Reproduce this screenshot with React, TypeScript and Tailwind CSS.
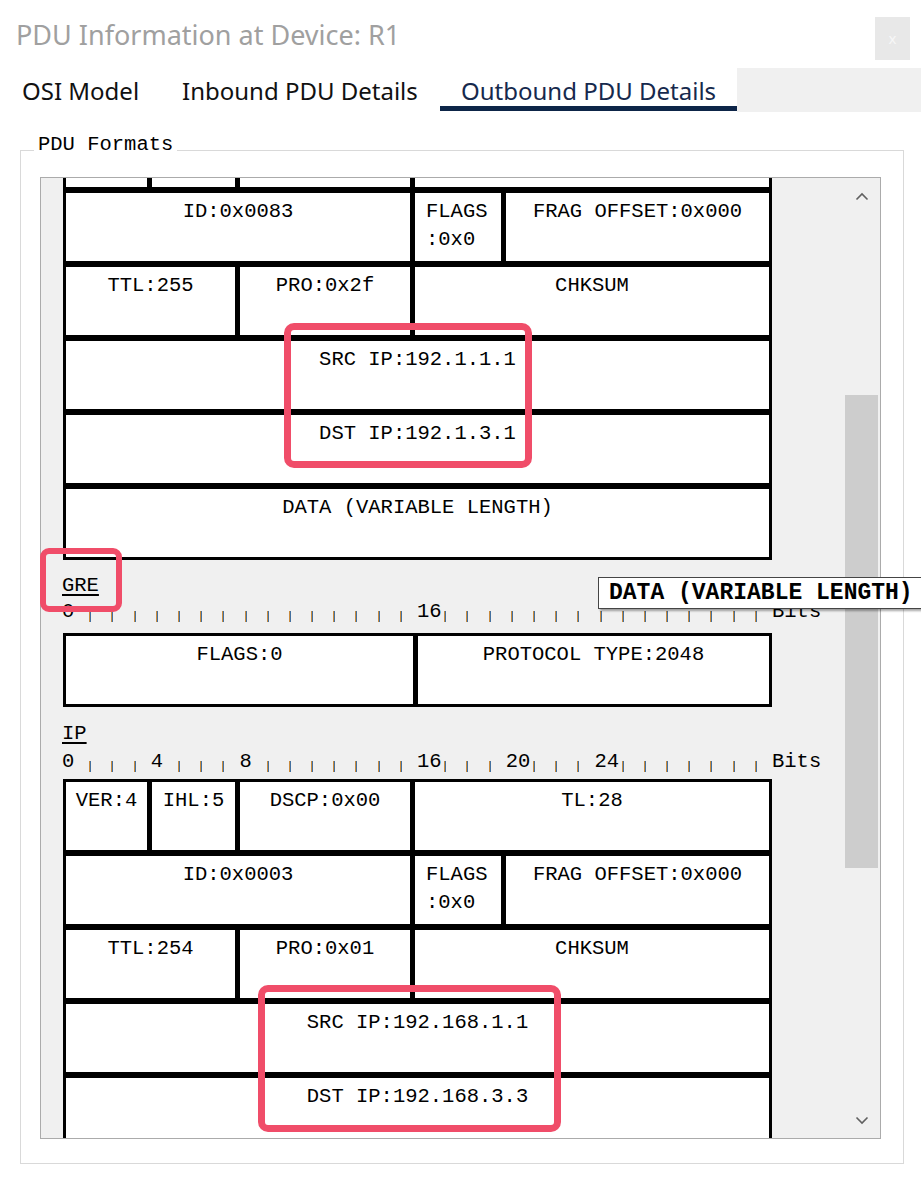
import React from "react";

const mono = "font-['Liberation_Mono',monospace] text-[20.5px] text-black";

const Cell = ({ w, children, h = "h-[68px]" }: { w: string; children?: React.ReactNode; h?: string }) => (
  <div className={`${w} ${h} bg-white text-center pt-[5px] leading-[28px] whitespace-nowrap overflow-hidden`}>
    {children}
  </div>
);

const FlagsCell = () => (
  <div className="w-[86px] h-[68px] bg-white pt-[5px] pl-[11px] leading-[28px] text-left">
    <div>FLAGS</div>
    <div>:0x0</div>
  </div>
);

const Row = ({ children }: { children: React.ReactNode }) => (
  <div className="flex gap-x-[5px]">{children}</div>
);

const Tick = () => (
  <div className="ml-[5px] mb-[2px] w-[2px] h-[11px] border-l border-[#c98b3e] bg-[#44709f]" />
);

const Ruler = ({ labels }: { labels: Record<number, string> }) => (
  <div className={`${mono} -ml-[1px] flex items-end h-[24px]`}>
    {Array.from({ length: 32 }).map((_, i) => (
      <div key={i} className="w-[22.19px] shrink-0 flex items-end h-full">
        {labels[i] ? <span className="leading-[24px]">{labels[i]}</span> : <Tick />}
      </div>
    ))}
    <span className="leading-[24px]">Bits</span>
  </div>
);

const Chevron = ({ down }: { down?: boolean }) => (
  <svg width="14" height="9" viewBox="0 0 14 9" className={down ? "rotate-180" : ""}>
    <path d="M1.5 7.5 L7 2 L12.5 7.5" fill="none" stroke="#606060" strokeWidth="1.6" />
  </svg>
);

export default function App() {
  return (
    <div className="relative w-[921px] h-[1180px] overflow-hidden bg-white">
      {/* title bar */}
      <div className="flex pt-[17px]">
        <div className="pl-[16px] leading-[36px] text-[27px] text-[#a0a0a0] font-['Noto_Sans',sans-serif]">
          PDU Information at Device: R1
        </div>
        <div className="ml-auto mr-[11px] w-[35px] h-[43px] bg-[#e8e8e8] flex items-center justify-center text-[15px] text-[#f7f7f7] font-['Noto_Sans',sans-serif]">
          x
        </div>
      </div>

      {/* tabs */}
      <div className="mt-[8px] flex h-[44px] font-['Noto_Sans',sans-serif] text-[24px]">
        <div className="w-[161px] h-[43px] pl-[22px] pt-[7px] leading-[31px] text-[#111]">OSI Model</div>
        <div className="w-[279px] h-[43px] pl-[21px] pt-[7px] leading-[31px] text-[#111]">Inbound PDU Details</div>
        <div className="w-[297px] h-[43px] pl-[21px] pt-[7px] leading-[31px] text-[#16294d] border-b-[5px] border-[#0d2548]">
          Outbound PDU Details
        </div>
        <div className="flex-1 bg-[#f0f0f0]" />
      </div>

      {/* group box */}
      <div className="relative mt-[38px] ml-[20px] w-[884px] border border-[#d9d9d9] pt-[26px] pb-[24px]">
        <span className={`${mono} absolute left-[13px] top-[-18px] px-[4px] bg-white leading-[24px]`}>PDU Formats</span>

        <div className="ml-[19px] w-[841px] h-[962px] border border-[#ababab] bg-[#f0f0f0] flex overflow-hidden">
          <div className={`${mono} flex-1 pl-[22px] overflow-hidden`}>
            {/* upper IP header (scrolled) */}
            <div className="w-[709px] bg-black px-[3px] pb-[3px] flex flex-col gap-y-[6px]">
              <Row>
                <Cell w="w-[81px]" h="h-[9px]" />
                <Cell w="w-[83px]" h="h-[9px]" />
                <Cell w="w-[170px]" h="h-[9px]" />
                <Cell w="flex-1" h="h-[9px]" />
              </Row>
              <Row>
                <Cell w="w-[344px]">ID:0x0083</Cell>
                <FlagsCell />
                <Cell w="flex-1">FRAG OFFSET:0x000</Cell>
              </Row>
              <Row>
                <Cell w="w-[169px]">TTL:255</Cell>
                <Cell w="w-[170px]">PRO:0x2f</Cell>
                <Cell w="flex-1">CHKSUM</Cell>
              </Row>
              <Row>
                <Cell w="flex-1">SRC IP:192.1.1.1</Cell>
              </Row>
              <Row>
                <Cell w="flex-1">DST IP:192.1.3.1</Cell>
              </Row>
              <Row>
                <Cell w="flex-1">DATA (VARIABLE LENGTH)</Cell>
              </Row>
            </div>

            {/* GRE */}
            <div className="mt-[14px] -ml-[1px] leading-[24px] underline underline-offset-[3px]">GRE</div>
            <div className="mt-[2px]">
              <Ruler labels={{ 0: "0", 16: "16" }} />
            </div>
            <div className="mt-[9px] w-[709px] bg-black p-[3px]">
              <Row>
                <Cell w="w-[347px]">FLAGS:0</Cell>
                <Cell w="flex-1">PROTOCOL TYPE:2048</Cell>
              </Row>
            </div>

            {/* IP */}
            <div className="mt-[15px] -ml-[1px] leading-[24px] underline underline-offset-[3px]">IP</div>
            <div className="mt-[4px]">
              <Ruler labels={{ 0: "0", 4: "4", 8: "8", 16: "16", 20: "20", 24: "24" }} />
            </div>
            <div className="mt-[5px] w-[709px] bg-black px-[3px] pt-[3px] pb-[3px] flex flex-col gap-y-[6px]">
              <Row>
                <Cell w="w-[81px]">VER:4</Cell>
                <Cell w="w-[83px]">IHL:5</Cell>
                <Cell w="w-[170px]">DSCP:0x00</Cell>
                <Cell w="flex-1">TL:28</Cell>
              </Row>
              <Row>
                <Cell w="w-[344px]">ID:0x0003</Cell>
                <FlagsCell />
                <Cell w="flex-1">FRAG OFFSET:0x000</Cell>
              </Row>
              <Row>
                <Cell w="w-[169px]">TTL:254</Cell>
                <Cell w="w-[170px]">PRO:0x01</Cell>
                <Cell w="flex-1">CHKSUM</Cell>
              </Row>
              <Row>
                <Cell w="flex-1">SRC IP:192.168.1.1</Cell>
              </Row>
              <Row>
                <Cell w="flex-1">DST IP:192.168.3.3</Cell>
              </Row>
            </div>
          </div>

          {/* scrollbar */}
          <div className="w-[35px] flex flex-col">
            <div className="h-[36px] flex items-center justify-center pr-[2px]">
              <Chevron />
            </div>
            <div className="flex-1">
              <div className="mt-[181px] w-[33px] h-[473px] bg-[#cdcdcd]" />
            </div>
            <div className="h-[36px] flex items-center justify-center pr-[2px]">
              <Chevron down />
            </div>
          </div>
        </div>
      </div>

      {/* highlight annotations */}
      <div className="absolute left-[284px] top-[323px] w-[248px] h-[145px] border-[7px] border-[#f04d69] rounded-[10px]" />
      <div className="absolute left-[40px] top-[548px] w-[82px] h-[64px] border-[6px] border-[#f04d69] rounded-[9px]" />
      <div className="absolute left-[258px] top-[985px] w-[303px] h-[147px] border-[7px] border-[#f04d69] rounded-[10px]" />

      {/* tooltip */}
      <div className="absolute left-[598px] top-[577px] w-[340px] h-[32px] bg-white border border-[#454545] shadow-[2px_2px_2px_rgba(0,0,0,0.35)] pl-[10px] leading-[30px] font-['Liberation_Mono',monospace] font-bold text-[23px] text-black whitespace-nowrap">
        DATA (VARIABLE LENGTH)
      </div>
    </div>
  );
}
